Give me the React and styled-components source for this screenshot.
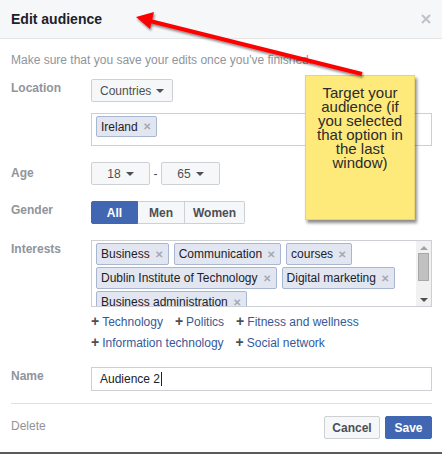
import React from "react"
import styled, { createGlobalStyle } from "styled-components"

const GlobalStyle = createGlobalStyle`
  html, body { margin: 0; padding: 0; background: #fff; }
  body { font-family: "Liberation Sans", Arial, sans-serif; font-size: 12px; color: #1d2129; }
`

const Dialog = styled.div`
  position: relative;
  width: 442px;
  height: 454px;
  box-sizing: border-box;
  border-bottom: 2px solid #5a5a5a;
  overflow: hidden;
`

const Header = styled.div`
  height: 38px;
  background: #f6f7f9;
  border-bottom: 1px solid #e5e5e5;
  display: flex;
  align-items: center;
  justify-content: space-between;
  padding: 0 11px;
`

const Title = styled.div`
  font-size: 14px;
  font-weight: bold;
  color: #1d2129;
  margin-top: -1px;
`

const Body = styled.div`
  padding: 13px 10px 0 11px;
`

const Hint = styled.div`
  color: #90949c;
  line-height: 16px;
  margin-bottom: 11px;
`

const Row = styled.div`
  display: grid;
  grid-template-columns: 80px 1fr;
  margin-bottom: ${p => p.$gap ?? 16}px;
`

const Label = styled.div`
  color: #90949c;
  font-weight: bold;
  line-height: 16px;
  padding-top: ${p => p.$top || 1}px;
`

const Stack = styled.div`
  display: flex;
  flex-direction: column;
  gap: 11px;
`

const Inline = styled.div`
  display: flex;
  align-items: center;
`

const Button = styled.div`
  height: 23px;
  box-sizing: border-box;
  display: inline-flex;
  align-items: center;
  justify-content: center;
  gap: 5px;
  padding: 0 8px;
  width: ${p => (p.$w ? p.$w + "px" : "auto")};
  background: ${p => (p.$primary ? "#4267b2" : "#f6f7f9")};
  border: 1px solid ${p => (p.$primary ? "#4267b2" : "#ced0d4")};
  border-radius: 2px;
  color: ${p => (p.$primary ? "#fff" : "#4b4f56")};
  font-weight: ${p => (p.$bold ? "bold" : "normal")};
  font-size: 12px;
`

const Caret = styled.span`
  width: 0;
  height: 0;
  border-left: 4px solid transparent;
  border-right: 4px solid transparent;
  border-top: 4px solid #4b4f56;
  margin-top: 1px;
`

const Dash = styled.span`
  width: 11px;
  text-align: center;
  color: #4b4f56;
`

const Segmented = styled.div`
  display: inline-flex;
  & > div { border-radius: 0; }
  & > div + div { border-left: none; }
  & > div:first-child { border-radius: 2px 0 0 2px; }
  & > div:last-child { border-radius: 0 2px 2px 0; }
`

const TagBox = styled.div`
  border: 1px solid #ccd0d5;
  height: ${p => p.$h}px;
  box-sizing: border-box;
  display: flex;
  overflow: hidden;
`

const TagList = styled.div`
  flex: 1;
  display: flex;
  flex-wrap: wrap;
  align-content: flex-start;
  gap: 2px 5px;
  padding: 2px 4px;
`

const Tag = styled.span`
  height: ${p => p.$h || 22}px;
  box-sizing: border-box;
  display: inline-flex;
  align-items: center;
  gap: 5px;
  padding: 0 5px 0 4px;
  background: #e2e6f0;
  border: 1px solid #a9b6d2;
  border-radius: 2px;
  color: #1d2129;
  font-size: 12px;
  white-space: nowrap;
`

const TagX = styled.span`
  color: #a5a9b2;
  font-weight: bold;
  font-size: 10px;
`

const Scrollbar = styled.div`
  width: 15px;
  background: #f1f1f1;
  display: flex;
  flex-direction: column;
  align-items: center;
  justify-content: space-between;
  padding: 5px 0 4px;
  box-sizing: border-box;
`

const Thumb = styled.div`
  width: 11px;
  height: 28px;
  background: #c1c1c1;
  border: 1px solid #a8a8a8;
  box-sizing: border-box;
  margin-top: 3px;
  margin-bottom: auto;
`

const ScrollArrow = styled.span`
  width: 0;
  height: 0;
  border-left: 4px solid transparent;
  border-right: 4px solid transparent;
  ${p => (p.$up ? "border-bottom: 4px solid #a3a3a3;" : "border-top: 4px solid #505050;")}
`

const Suggestions = styled.div`
  display: flex;
  flex-wrap: wrap;
  column-gap: 12px;
  width: 300px;
  margin-top: 4px;
  line-height: 20px;
`

const Suggestion = styled.span`
  color: #365899;
  white-space: nowrap;
  &::before {
    content: "+";
    color: #4b4f56;
    font-weight: bold;
    font-size: 14px;
    margin-right: 3px;
  }
`

const TextInput = styled.div`
  height: 24px;
  box-sizing: border-box;
  border: 1px solid #ccd0d5;
  display: flex;
  align-items: center;
  padding: 0 8px;
  font-size: 12px;
  color: #1d2129;
`

const Cursor = styled.span`
  display: inline-block;
  width: 1px;
  height: 14px;
  background: #1d2129;
  margin-left: 1px;
`

const Divider = styled.div`
  border-top: 1px solid #dddfe2;
  margin-top: 12px;
`

const Footer = styled.div`
  display: flex;
  align-items: center;
  justify-content: space-between;
  padding-top: 12px;
`

const DeleteLink = styled.span`
  color: #90949c;
  margin-top: -3px;
`

const Actions = styled.div`
  display: flex;
  gap: 5px;
`

const Note = styled.div`
  position: absolute;
  left: 305px;
  top: 75px;
  width: 110px;
  height: 145px;
  box-sizing: border-box;
  background: #fee97b;
  border: 1px solid #e8d46a;
  box-shadow: 2px 3px 3px rgba(0, 0, 0, 0.45);
  padding: 10px 8px 0;
  text-align: center;
  font-size: 15px;
  line-height: 14px;
  color: #2b2b2b;
`

const ArrowLayer = styled.svg`
  position: absolute;
  left: 0;
  top: 0;
  pointer-events: none;
`

const interests = [
  "Business",
  "Communication",
  "courses",
  "Dublin Institute of Technology",
  "Digital marketing",
  "Business administration",
]

const suggestions = ["Technology", "Politics", "Fitness and wellness", "Information technology", "Social network"]

export default function App() {
  return (
    <>
      <GlobalStyle />
      <Dialog>
        <Header>
          <Title>Edit audience</Title>
          <svg width="10" height="10" viewBox="0 0 10 10">
            <path d="M1 1 L9 9 M9 1 L1 9" stroke="#bec2c9" strokeWidth="2" />
          </svg>
        </Header>
        <Body>
          <Hint>Make sure that you save your edits once you've finished.</Hint>

          <Row>
            <Label>Location</Label>
            <Stack>
              <Inline>
                <Button>Countries <Caret /></Button>
              </Inline>
              <TagBox $h={33}>
                <TagList>
                  <Tag $h={21}>Ireland <TagX>✕</TagX></Tag>
                </TagList>
              </TagBox>
            </Stack>
          </Row>

          <Row>
            <Label $top={3}>Age</Label>
            <Inline>
              <Button $w={59}>18 <Caret /></Button>
              <Dash>-</Dash>
              <Button $w={59}>65 <Caret /></Button>
            </Inline>
          </Row>

          <Row>
            <Label $top={1}>Gender</Label>
            <Inline>
              <Segmented>
                <Button $primary $bold $w={47}>All</Button>
                <Button $bold $w={47}>Men</Button>
                <Button $bold $w={60}>Women</Button>
              </Segmented>
            </Inline>
          </Row>

          <Row $gap={14}>
            <Label $top={1}>Interests</Label>
            <div>
              <TagBox $h={67}>
                <TagList>
                  {interests.map(t => (
                    <Tag key={t}>{t} <TagX>✕</TagX></Tag>
                  ))}
                </TagList>
                <Scrollbar>
                  <ScrollArrow $up />
                  <Thumb />
                  <ScrollArrow />
                </Scrollbar>
              </TagBox>
              <Suggestions>
                {suggestions.map(s => (
                  <Suggestion key={s}>{s}</Suggestion>
                ))}
              </Suggestions>
            </div>
          </Row>

          <Row $gap={0}>
            <Label $top={1}>Name</Label>
            <TextInput>Audience 2<Cursor /></TextInput>
          </Row>

          <Divider />

          <Footer>
            <DeleteLink>Delete</DeleteLink>
            <Actions>
              <Button $bold $w={56}>Cancel</Button>
              <Button $primary $bold $w={47}>Save</Button>
            </Actions>
          </Footer>
        </Body>

        <Note>Target your audience (if you selected that option in the last window)</Note>

        <ArrowLayer width="442" height="454" viewBox="0 0 442 454">
          <defs>
            <filter id="sh" x="-10%" y="-50%" width="120%" height="200%">
              <feDropShadow dx="1" dy="2" stdDeviation="1.2" floodColor="#000" floodOpacity="0.45" />
            </filter>
          </defs>
          <g filter="url(#sh)">
            <line x1="150" y1="21" x2="362" y2="74" stroke="#ff0000" strokeWidth="4" />
            <polygon points="136,17 154,12 150,29" fill="#ff0000" />
          </g>
        </ArrowLayer>
      </Dialog>
    </>
  )
}
